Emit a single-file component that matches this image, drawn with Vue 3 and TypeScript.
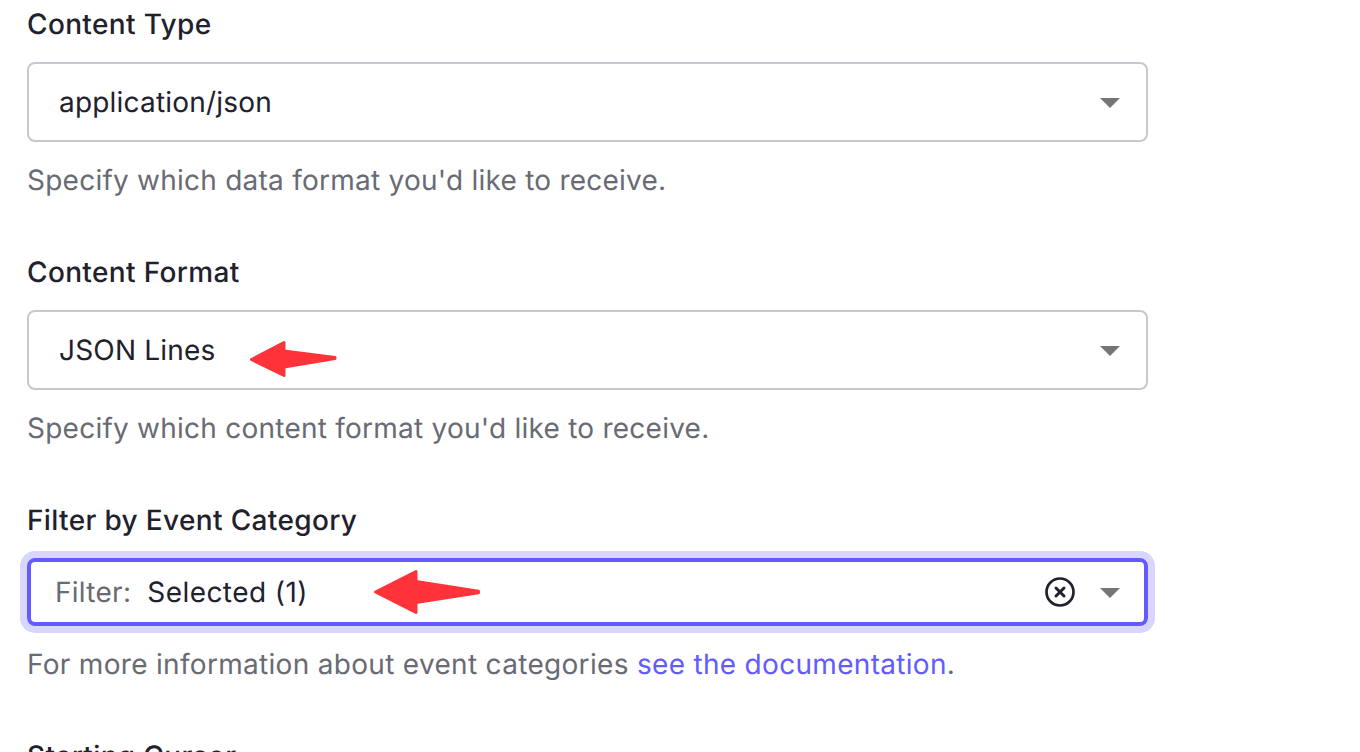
<script setup lang="ts">
import { ref } from 'vue'

const fields = ref([
  { label: 'Content Type', value: 'application/json', help: "Specify which data format you'd like to receive.", arrow: false },
  { label: 'Content Format', value: 'JSON Lines', help: "Specify which content format you'd like to receive.", arrow: true },
])
</script>

<template>
  <main class="form">
    <section v-for="field in fields" :key="field.label" class="field">
      <div class="label">{{ field.label }}</div>
      <div class="select">
        <span class="value">{{ field.value }}</span>
        <svg v-if="field.arrow" class="pointer small" viewBox="0 0 88 38">
          <path d="M2.5 19.5 L35 2.5 V11 L86 17.5 V18.5 L35 27 V35.5 Z" />
        </svg>
        <svg class="caret" viewBox="0 0 20 10"><path d="M0 0H20L10 10Z" /></svg>
      </div>
      <div class="help">{{ field.help }}</div>
    </section>
    <section class="field">
      <div class="label">Filter by Event Category</div>
      <div class="select focused">
        <span class="prefix">Filter:</span>
        <span class="value">Selected (1)</span>
        <svg class="pointer large" viewBox="0 0 108 46">
          <path d="M2.5 23 L43 2.5 V12.5 L105.5 22.3 V23.7 L43 33.5 V43.5 Z" />
        </svg>
        <svg class="clear" viewBox="0 0 32 32">
          <circle cx="16" cy="16" r="13.5" />
          <path d="M12 12L20 20M20 12L12 20" />
        </svg>
        <svg class="caret" viewBox="0 0 20 10"><path d="M0 0H20L10 10Z" /></svg>
      </div>
      <div class="help last">For more information about event categories <a>see the documentation</a>.</div>
    </section>
    <div class="label">Starting Cursor</div>
  </main>
</template>

<style>
body { overflow: hidden; background: #fff; }
</style>

<style scoped>
.form {
  box-sizing: border-box;
  height: 752px;
  overflow: hidden;
  padding: 4px 0 0 27px;
  font-family: Inter, "Liberation Sans", sans-serif;
  font-size: 28px;
  line-height: 40px;
  letter-spacing: 0.28px;
  text-rendering: geometricPrecision;
  color: #1f212d;
  white-space: nowrap;
}
.field { height: 248px; }
.field:nth-of-type(3) { height: 236px; }
.label { height: 40px; font-weight: 500; letter-spacing: 0.35px; }
.field .label { margin-bottom: 18px; }
.select {
  position: relative;
  box-sizing: border-box;
  display: flex;
  align-items: center;
  width: 1121px;
  height: 80px;
  padding: 0 26px 0 30px;
  border: 2px solid #c8c7ce;
  border-radius: 8px;
}
.value { letter-spacing: 0.2px; }
.caret { width: 20px; height: 10px; margin: 2px 0 0 auto; fill: #757575; }
.help { margin-top: 18px; color: #696b74; letter-spacing: 0.24px; }
.help.last { letter-spacing: 0.31px; }
.focused {
  height: 68px;
  padding: 0 24px;
  border: 4px solid #635bff;
  box-shadow: 0 0 0 7px #d8d6ff;
}
.focused .value { letter-spacing: 0.43px; }
.prefix { margin-right: 16px; color: #696b74; }
.pointer {
  position: absolute;
  fill: #ff3339;
  stroke: #ff3339;
  stroke-width: 3;
  stroke-linejoin: round;
}
.small { left: 220px; top: 28px; width: 88px; height: 38px; }
.large { left: 342px; top: 7px; width: 108px; height: 46px; }
.clear { width: 32px; height: 32px; margin-left: auto; fill: none; stroke: #1f212d; stroke-width: 2.7; }
.clear path { stroke-width: 3; stroke-linecap: round; }
.clear + .caret { margin-left: 24px; }
a { color: #635bff; }
</style>
